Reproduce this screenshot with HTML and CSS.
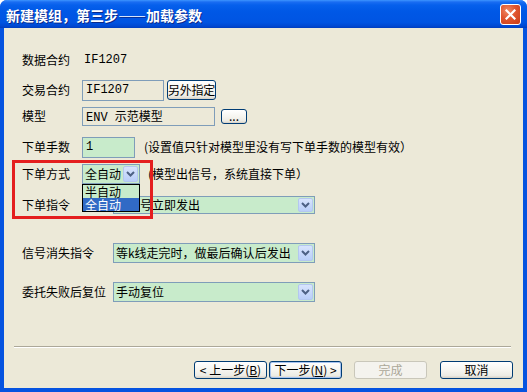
FILE: index.html
```html
<!DOCTYPE html>
<html lang="zh">
<head>
  <meta charset="UTF-8">
  <title>新建模组</title>
  <link rel="stylesheet" href="styles.css">
</head>
<body>
  <div class="dialog">
    <div class="titlebar">
      <span class="title">新建模组，第三步——加载参数</span>
      <span class="close">
        <svg width="11" height="11" viewBox="0 0 11 11"><path d="M1.5 1.5 L9.5 9.5 M9.5 1.5 L1.5 9.5" stroke="#fff" stroke-width="2.2" stroke-linecap="square"/></svg>
      </span>
    </div>
    <div class="frame">
      <div class="form">
        <div class="row r1">
          <span class="lbl">数据合约</span>
          <span class="val mono">IF1207</span>
        </div>
        <div class="row r2">
          <span class="lbl">交易合约</span>
          <input class="edit ro w-code mono" value="IF1207" readonly>
          <button class="btn btn-pick">另外指定</button>
        </div>
        <div class="row r3">
          <span class="lbl">模型</span>
          <input class="edit ro w-model mono" value="ENV 示范模型" readonly>
          <button class="btn btn-dots">...</button>
        </div>
        <div class="row r4">
          <span class="lbl">下单手数</span>
          <input class="edit green w-qty mono" value="1">
          <span class="note">(设置值只针对模型里没有写下单手数的模型有效）</span>
        </div>
        <div class="row r5">
          <span class="lbl">下单方式</span>
          <div class="combo w-mode">
            <span class="combo-text">全自动</span>
            <span class="arrow"><svg width="9" height="6" viewBox="0 0 9 6"><path d="M1 1 L4.5 4.5 L8 1" fill="none" stroke="#4D6185" stroke-width="2"/></svg></span>
            <div class="droplist">
              <div class="item">半自动</div>
              <div class="item sel">全自动</div>
            </div>
          </div>
          <span class="note note-mode">(模型出信号，系统直接下单）</span>
        </div>
        <div class="row r6">
          <span class="lbl wide">下单指令</span>
          <div class="combo w-long h18">
            <span class="combo-text">有信号立即发出</span>
            <span class="arrow"><svg width="9" height="6" viewBox="0 0 9 6"><path d="M1 1 L4.5 4.5 L8 1" fill="none" stroke="#4D6185" stroke-width="2"/></svg></span>
          </div>
        </div>
        <div class="row r7">
          <span class="lbl wide">信号消失指令</span>
          <div class="combo w-long">
            <span class="combo-text">等k线走完时，做最后确认后发出</span>
            <span class="arrow"><svg width="9" height="6" viewBox="0 0 9 6"><path d="M1 1 L4.5 4.5 L8 1" fill="none" stroke="#4D6185" stroke-width="2"/></svg></span>
          </div>
        </div>
        <div class="row r8">
          <span class="lbl wide">委托失败后复位</span>
          <div class="combo w-long">
            <span class="combo-text">手动复位</span>
            <span class="arrow"><svg width="9" height="6" viewBox="0 0 9 6"><path d="M1 1 L4.5 4.5 L8 1" fill="none" stroke="#4D6185" stroke-width="2"/></svg></span>
          </div>
        </div>
      </div>

      <!-- 标注框 -->
      <div class="mark"></div>

      <div class="sep"></div>
      <div class="footer">
        <button class="btn btn-nav">&lt; 上一步(<u>B</u>)</button>
        <button class="btn btn-nav default">下一步(<u>N</u>) &gt;</button>
        <button class="btn btn-nav disabled">完成</button>
        <button class="btn btn-nav cancel">取消</button>
      </div>
    </div>
  </div>
</body>
</html>
```

FILE: styles.css
```css
/* 对话框基础样式 */
body {
  margin: 0;
  background: #fff;
  font-family: "Noto Sans CJK SC", sans-serif;
  font-size: 12px;
  color: #000;
}
.dialog {
  width: 527px;
  height: 392px;
  display: flex;
  flex-direction: column;
  border-radius: 7px 7px 0 0;
  overflow: hidden;
  background: #0553E0;
}
.titlebar {
  height: 28px;
  flex: none;
  box-sizing: border-box;
  display: flex;
  align-items: center;
  justify-content: space-between;
  padding: 1px 6px 0 6px;
  background: linear-gradient(#3D95FF 0, #1A6DF2 2px, #0660EC 5px, #0058E6 40%, #0054E2 80%, #0048D2 93%, #003DBE 100%);
}
.title {
  color: #fff;
  font-weight: bold;
  font-size: 14px;
  line-height: 16px;
  text-shadow: 1px 1px 0 #0A2A8C;
}
.close {
  width: 21px;
  height: 21px;
  box-sizing: border-box;
  border: 1px solid #fff;
  border-radius: 3px;
  display: flex;
  align-items: center;
  justify-content: center;
  background: radial-gradient(circle at 35% 30%, #F08A66 0, #E0552E 45%, #C83A16 100%);
}
.frame {
  flex: 1;
  display: flex;
  flex-direction: column;
  position: relative;
  background: #ECE9D8;
  border: 4px solid #0553E0;
  border-top: 0;
}

/* 表单行 */
.form {
  padding: 21px 0 0 18px;
}
.row {
  display: flex;
  align-items: center;
  height: 22px;
}
.r2 { margin-top: 8px; }
.r3 { margin-top: 4px; }
.r4 { margin-top: 9px; }
.r5 { margin-top: 5px; }
.r6 { margin-top: 9px; }
.r7 { margin-top: 26px; }
.r8 { margin-top: 17px; }
.lbl {
  width: 60px;
  flex: none;
  line-height: 14px;
}
.lbl.wide { width: 91px; }
.val {
  padding-left: 2px;
  line-height: 14px;
}
.mono {
  font-family: "Liberation Mono", "Noto Sans CJK SC", monospace;
  font-size: 12px;
}
.note {
  margin-left: 9px;
  line-height: 14px;
}
.note-mode { margin-left: 8px; }

/* 编辑框 */
.edit {
  box-sizing: border-box;
  height: 21px;
  margin: 0;
  padding: 0 3px;
  border: 1px solid #7F9DB9;
  outline: none;
  color: #000;
}
.edit.ro { background: #ECE9D8; }
.edit.green { background: #C8EBCB; }
.w-code { width: 82px; }
.w-model { width: 133px; height: 19px; }
.w-qty { width: 53px; }

/* 按钮 */
.btn {
  box-sizing: border-box;
  margin: 0;
  padding: 0;
  font-family: "Noto Sans CJK SC", sans-serif;
  font-size: 12px;
  line-height: 14px;
  color: #000;
  white-space: nowrap;
  overflow: hidden;
  border: 1px solid #003C74;
  border-radius: 3px;
  background: linear-gradient(#FFFFFF 0, #F6F5F0 50%, #ECEBE4 85%, #D6D0C5 100%);
}
.btn-pick {
  width: 49px;
  height: 20px;
  margin-left: 3px;
  letter-spacing: -0.3px;
}
.btn-dots {
  width: 26px;
  height: 15px;
  margin-left: 6px;
  line-height: 10px;
}

/* 下拉框 */
.combo {
  box-sizing: border-box;
  height: 20px;
  position: relative;
  display: flex;
  align-items: center;
  justify-content: space-between;
  border: 1px solid #7F9DB9;
  background: #C8EBCB;
}
.combo.h18 { height: 18px; }
.w-mode { width: 58px; }
.w-long { width: 202px; }
.combo-text {
  padding-left: 2px;
  line-height: 14px;
  white-space: nowrap;
}
.arrow {
  box-sizing: border-box;
  width: 15px;
  height: calc(100% - 2px);
  margin-right: 1px;
  display: flex;
  align-items: center;
  justify-content: center;
  border: 1px solid #B3C7F0;
  border-radius: 2px;
  background: linear-gradient(#D8E4FD, #B9CEF9);
}
.droplist {
  position: absolute;
  left: -1px;
  top: 19px;
  width: 58px;
  box-sizing: border-box;
  border: 1px solid #000;
  background: #C8EBCB;
  z-index: 2;
}
.item {
  height: 13px;
  line-height: 13px;
  padding-left: 2px;
}
.item.sel {
  background: #316AC5;
  color: #fff;
}

/* 红色标注框 */
.mark {
  position: absolute;
  left: 8px;
  top: 132px;
  width: 141px;
  height: 59px;
  box-sizing: border-box;
  border: 3px solid #E41E1E;
  z-index: 3;
}

/* 底部按钮区 */
.sep {
  margin: 43px 12px 0 10px;
  border-top: 1px solid #ACA899;
  border-bottom: 1px solid #fff;
}
.footer {
  display: flex;
  justify-content: flex-end;
  margin-top: 13px;
  padding-right: 10px;
}
.btn-nav {
  width: 73px;
  height: 18px;
}
.btn-nav.default {
  margin-left: 2px;
  box-shadow: inset 0 0 0 1px #A8C4F0;
}
.btn-nav.disabled {
  margin-left: 12px;
  color: #ACA899;
  border-color: #C9C7BA;
  background: #F4F3EE;
}
.btn-nav.cancel { margin-left: 13px; }
```
